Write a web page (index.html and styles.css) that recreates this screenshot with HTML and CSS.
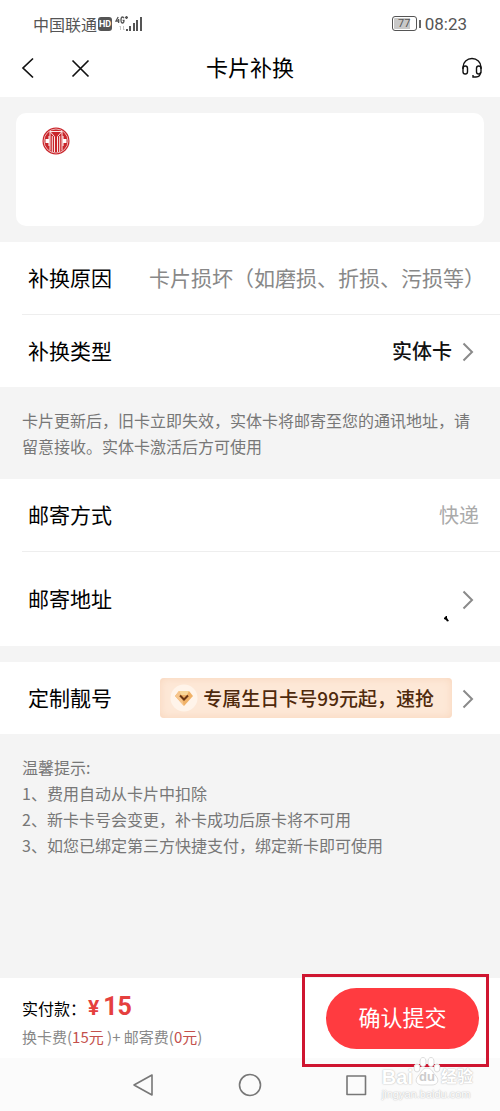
FILE: index.html
```html
<!DOCTYPE html>
<html lang="zh-CN">
<head>
<meta charset="utf-8">
<meta name="viewport" content="width=device-width, initial-scale=1">
<title>卡片补换</title>
<link rel="stylesheet" href="styles.css">
</head>
<body>
<div class="status">
  <div class="status-left">
    <span>中国联通</span>
    <span class="hd">HD</span>
    <svg class="signal" width="28" height="18" viewBox="0 0 28 18" aria-hidden="true">
      <g fill="none" stroke="#555" stroke-width="1.3"><path d="M3.200 2 1 6h3.400M3.600 4v4"/><path d="M9 3.200Q8.500 2 7.500 2 6 2 6 5t1.500 3Q9 8 9 5.300H7.600"/><path d="M10 2.500h3M11.500 1v3"/></g>
      <path d="M5.500 11v4M4.500 12l1-1M8.500 11v4l1-1" fill="none" stroke="#c4c4c4"/>
      <path d="M11 14h2v2h-2zM14 11h2v5h-2zM18 8h2v8h-2zM21 5h2v11h-2zM25 2h2v14h-2z" fill="#555"/>
    </svg>
  </div>
  <div class="status-right">
    <span class="battery">77</span><span class="battery-tip"></span>
    <span class="time">08:23</span>
  </div>
</div>

<header class="nav">
  <div class="nav-side">
    <button class="icon-btn" aria-label="返回"><svg width="24" height="24" viewBox="0 0 24 24"><path d="M17 2.500 7 12l10 9.500"/></svg></button>
    <button class="icon-btn" aria-label="关闭"><svg width="24" height="24" viewBox="0 0 24 24"><path d="m4.500 4.500 16 16M20.500 4.500l-16 16"/></svg></button>
  </div>
  <h1 class="title">卡片补换</h1>
  <div class="nav-side nav-end">
    <button class="icon-btn" aria-label="客服"><svg class="thin" width="24" height="24" viewBox="0 0 24 24"><path d="M3 13V11a9 8.500 0 0 1 18 0v2"/><rect x="3" y="10" width="4.500" height="8" rx="2.200"/><rect x="16.500" y="10" width="4.500" height="8" rx="2.200"/><path d="M20.500 16q0 5-4.500 5h-3v-2"/></svg></button>
  </div>
</header>

<main class="main">
  <section class="card-area">
    <div class="card">
      <svg width="28" height="28" viewBox="0 0 28 28" role="img" aria-label="银行标志">
        <circle cx="14" cy="14" r="13.500" fill="#c9252b"/>
        <circle cx="14" cy="14" r="12" fill="none" stroke="#f6d5d5" stroke-width=".8"/>
        <g fill="none" stroke="#fbe9e9" stroke-width="1"><path d="M8 23.500V4.500l4.500 5V25M20 23.500V4.500l-4.500 5V25"/><path d="M8 4.500h12"/><path d="M10.300 9v16M17.700 9v16"/></g>
        <path d="M3.500 12h3v-3h1v10h-1v-3h-3zM24.500 12h-3v-3h-1v10h1v-3h3z" fill="#fff"/>
      </svg>
    </div>
  </section>

  <section class="group">
    <div class="row"><span class="label">补换原因</span><span class="reason">卡片损坏（如磨损、折损、污损等）</span></div>
    <button class="row divided"><span class="label">补换类型</span><span class="value">实体卡</span><svg class="chevron" width="12" height="22" viewBox="0 0 12 22" aria-hidden="true"><path d="m1.500 3.500 8.500 8.500-8.500 8.500"/></svg></button>
  </section>

  <p class="note">卡片更新后，旧卡立即失效，实体卡将邮寄至您的通讯地址，请留意接收。实体卡激活后方可使用</p>

  <section class="group">
    <div class="row"><span class="label">邮寄方式</span><span class="muted">快递</span></div>
    <button class="row tall divided"><span class="label">邮寄地址</span><svg class="speck" width="5" height="6" viewBox="0 0 5 6" aria-hidden="true"><path d="M0 2 2 0h1v2l2 3-2 .5L2 4 0 3z"/></svg><svg class="chevron" width="12" height="22" viewBox="0 0 12 22" aria-hidden="true"><path d="m1.500 3.500 8.500 8.500-8.500 8.500"/></svg></button>
  </section>

  <section class="group spaced">
    <button class="row"><span class="label">定制靓号</span><span class="promo"><svg width="28" height="28" viewBox="0 0 28 28" aria-hidden="true"><circle cx="14" cy="14" r="13.500" fill="#fff4ea"/><path d="M9 7h10l4 5-9 10-9-10z" fill="#f0b268"/><path d="M9 7h10l-2 4h-6z" fill="#f9d698"/><path d="m5 12 4-5 2 5 3 10z" fill="#f6c58c"/><path d="m10 11.500 4 4 4-4" fill="none" stroke="#6b3513" stroke-width="2"/></svg>专属生日卡号99元起，速抢</span><svg class="chevron" width="12" height="22" viewBox="0 0 12 22" aria-hidden="true"><path d="m1.500 3.500 8.500 8.500-8.500 8.500"/></svg></button>
  </section>

  <section class="tips">
    <p>温馨提示:</p>
    <p>1、费用自动从卡片中扣除</p>
    <p>2、新卡卡号会变更，补卡成功后原卡将不可用</p>
    <p>3、如您已绑定第三方快捷支付，绑定新卡即可使用</p>
  </section>
</main>

<footer class="pay">
  <div class="sum">
    <p class="total">实付款：<span class="yen">¥</span><strong class="amount">15</strong></p>
    <p class="detail">换卡费(<span class="red">15元</span> )+ 邮寄费(<span class="red">0元</span>)</p>
  </div>
  <div class="submit-wrap"><button class="submit">确认提交</button></div>
</footer>

<div class="system">
  <button class="icon-btn" aria-label="系统返回"><svg width="24" height="24" viewBox="0 0 24 24"><path d="M21 2v20L3 12z"/></svg></button>
  <button class="icon-btn" aria-label="主屏幕"><svg width="24" height="24" viewBox="0 0 24 24"><circle cx="12" cy="12" r="10.500"/></svg></button>
  <button class="icon-btn" aria-label="最近任务"><svg width="24" height="24" viewBox="0 0 24 24"><rect x="2" y="3" width="18.500" height="18.500"/></svg></button>
  <div class="watermark">
    <div class="mark-row"><span>Bai</span><span class="paw"><svg width="28" height="30" viewBox="0 0 28 30" aria-hidden="true"><ellipse cx="4" cy="11" rx="3" ry="4"/><ellipse cx="10" cy="5" rx="3" ry="4.500"/><ellipse cx="18" cy="5" rx="3" ry="4.500"/><ellipse cx="24" cy="11" rx="3" ry="4"/><path d="M14 11c5 0 6 5 9 8 4 5 1 9-4 9H9c-5 0-8-4-4-9 3-3 4-8 9-8z"/></svg><span class="du">du</span></span><span class="mark-cn">经验</span></div>
    <div class="mark-url">jingyan.baidu.com</div>
  </div>
</div>
</body>
</html>
```
FILE: styles.css
```css
* { box-sizing: border-box; }
body {
  margin: 0;
  min-height: 100vh;
  display: flex;
  flex-direction: column;
  background: #fff;
  color: #111;
  font-family: "Noto Sans CJK SC", sans-serif;
}
p, h1 { margin: 0; }
button {
  font: inherit;
  color: inherit;
  background: none;
  border: 0;
  padding: 0;
  cursor: pointer;
}
svg { display: block; flex: none; }

.status {
  height: 47px;
  padding: 0 33px;
  display: flex;
  justify-content: space-between;
  align-items: center;
  color: #555;
  font-size: 16px;
}
.status-left, .status-right { display: flex; align-items: center; }
.hd {
  width: 14px;
  margin-left: 1px;
  border-radius: 3px;
  background: #555;
  color: #fff;
  font: bold 9px/14px "Roboto", sans-serif;
  text-align: center;
}
.signal { margin-left: 3px; }
.battery {
  width: 25px;
  border: 1px solid #555;
  border-radius: 3px;
  background: linear-gradient(90deg, #c8c8c8 75%, #fff 75%);
  box-shadow: inset 0 0 0 1px #fff;
  font: 11px/13px "Roboto", sans-serif;
  text-align: center;
}
.battery-tip { width: 2px; height: 8px; margin: 0 4px 0 2px; background: #666; }
.time { font: 17px/20px "Roboto", sans-serif; }

.nav {
  height: 50px;
  padding: 0 16px 8px;
  display: flex;
  align-items: center;
}
.nav-side { flex: 1; display: flex; gap: 28px; }
.nav-end { justify-content: flex-end; }
.title { padding-bottom: 4px; font-size: 22px; line-height: 32px; font-weight: 400; color: #000; }
.icon-btn svg { fill: none; stroke: #111; stroke-width: 1.7; }
.icon-btn .thin { stroke-width: 1.4; }

.main { flex: 1; background: #f4f4f4; }
.card-area { padding: 16px; }
.card { min-height: 113px; padding: 14px 26px; border-radius: 10px; background: #fff; }

.group { background: #fff; }
.spaced { margin-top: 16px; }
.row {
  position: relative;
  width: 100%;
  min-height: 72px;
  padding: 0 26px 0 28px;
  display: flex;
  align-items: center;
  justify-content: space-between;
  font-size: 20px;
  line-height: 30px;
  text-align: left;
}
.divided { min-height: 73px; }
.divided::before {
  content: "";
  position: absolute;
  top: 0;
  left: 22px;
  right: 0;
  height: 1px;
  background: #eee;
}
.tall { min-height: 95px; }
.label { flex: 1; padding-bottom: 2px; font-size: 21px; color: #000; white-space: nowrap; }
.reason { margin-right: -11px; padding-bottom: 2px; font-size: 21px; color: #888; white-space: nowrap; }
.value { font-weight: 500; }
.muted { margin-right: -5px; color: #aaa; }
.chevron { margin-left: 10px; fill: none; stroke: #8a8a8a; stroke-width: 2; }
.speck { align-self: flex-end; margin-bottom: 24px; }
.speck + .chevron { margin-left: 13px; }
.promo {
  height: 40px;
  padding: 0 18px 0 10px;
  display: flex;
  align-items: center;
  gap: 5px;
  border-radius: 4px;
  background: #fde8d7;
  box-shadow: inset 0 0 8px #f8d5bc;
  color: #4f2a0c;
  font-size: 19px;
  font-weight: 500;
  white-space: nowrap;
}
.note, .tips { padding: 20px 22px; color: #777; font-size: 16px; line-height: 26px; }

.pay {
  min-height: 80px;
  padding-left: 22px;
  display: flex;
  align-items: center;
  justify-content: space-between;
}
.sum { padding-top: 4px; }
.total { font-size: 16px; line-height: 34px; color: #000; }
.yen { margin-left: 2px; color: #e5403e; font: bold 21px/30px "Roboto", sans-serif; }
.amount { margin-left: 4px; color: #e5403e; font: bold 25px/30px "Roboto", sans-serif; }
.detail { font-size: 15px; line-height: 24px; color: #888; }
.red { color: #c4504c; }
.submit-wrap {
  position: relative;
  z-index: 1;
  margin: -4px 11px -9px 0;
  padding: 11px 7px 15px 21px;
  border: 3px solid #cf1530;
}
.submit {
  display: block;
  width: 153px;
  height: 61px;
  padding-bottom: 6px;
  border-radius: 31px;
  background: #ff3b40;
  color: #fff;
  font-size: 22px;
}

.system {
  position: relative;
  height: 53px;
  padding: 0 131px;
  display: flex;
  align-items: center;
  justify-content: space-between;
  background: #fbfbfb;
}
.system .icon-btn svg { stroke: #777; stroke-width: 1.6; stroke-linejoin: round; }
.watermark {
  position: absolute;
  z-index: 2;
  right: 27px;
  bottom: 10px;
  color: #fff;
  text-shadow: 0 0 1px #bbb, 0 0 2px #ccc;
  font-family: "Liberation Sans", "Noto Sans CJK SC", sans-serif;
}
.mark-row { display: flex; align-items: flex-end; font-size: 20px; line-height: 20px; font-weight: bold; }
.paw { position: relative; }
.paw svg { fill: #fff; stroke: #ddd; stroke-width: 1; }
.du { position: absolute; left: 0; right: 0; bottom: 3px; color: #ccc; text-shadow: none; font-size: 13px; line-height: 14px; text-align: center; }
.mark-cn { font-size: 16px; }
.mark-url { font-size: 11px; line-height: 14px; }
```
